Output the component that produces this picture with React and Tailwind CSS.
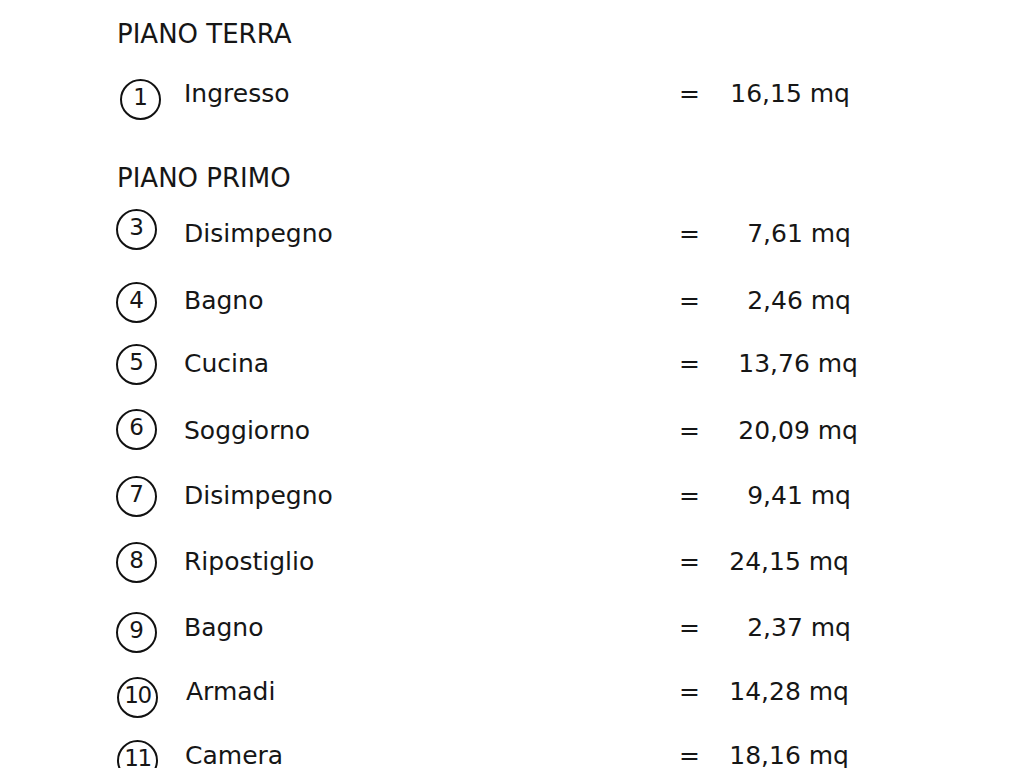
import React from 'react';

const rows = [
  { n: '1', name: 'Ingresso', value: '16,15 mq', mt: 'mt-[23px]', circle: 'ml-[3px] mt-[10px]', valueCls: 'w-[155px]' },
  { heading: 'PIANO PRIMO', mt: 'mt-[47px]' },
  { n: '3', name: 'Disimpegno', value: '7,61 mq', mt: 'mt-[19px]', circle: 'ml-[-1px] mb-[10px]', valueCls: 'w-[156px]' },
  { n: '4', name: 'Bagno', value: '2,46 mq', mt: 'mt-[23px]', circle: 'ml-[-1px] mt-[2px]', valueCls: 'w-[156px]' },
  { n: '5', name: 'Cucina', value: '13,76 mq', mt: 'mt-[19px]', circle: 'ml-[-1px]', valueCls: 'w-[163px]' },
  { n: '6', name: 'Soggiorno', value: '20,09 mq', mt: 'mt-[23px]', circle: 'ml-[-1px] mb-[4px]', valueCls: 'w-[163px]' },
  { n: '7', name: 'Disimpegno', value: '9,41 mq', mt: 'mt-[21px]', circle: 'ml-[-1px]', valueCls: 'w-[156px]' },
  { n: '8', name: 'Ripostiglio', value: '24,15 mq', mt: 'mt-[22px]', circle: 'ml-[-1px]', valueCls: 'w-[154px]' },
  { n: '9', name: 'Bagno', value: '2,37 mq', mt: 'mt-[22px]', circle: 'ml-[-1px] mt-[8px]', valueCls: 'w-[156px]' },
  { n: '10', name: 'Armadi', value: '14,28 mq', mt: 'mt-[20px]', circle: 'ml-[0px] mt-[10px]', valueCls: 'w-[154px]', nameCls: 'pl-[2px]' },
  { n: '11', name: 'Camera', value: '18,16 mq', mt: 'mt-[20px]', circle: 'ml-[0px] mt-[8px]', valueCls: 'w-[154px]', nameCls: 'pl-[1px]' },
];

function Circle({ n, className }) {
  return (
    <div className={`w-[41px] h-[41px] shrink-0 rounded-full border-[2px] border-[#111] flex items-center justify-center text-[23px] leading-none ${n.length > 1 ? 'tracking-[-1.5px]' : ''} ${className}`}>
      <span className="mt-[-3px]">{n}</span>
    </div>
  );
}

export default function App() {
  return (
    <div className="min-h-screen bg-white text-[#161616] font-['DejaVu_Sans',sans-serif] pl-[117px] pt-[19px] overflow-hidden h-[768px]">
      <div className="h-[30px] text-[26px] leading-[30px]">PIANO TERRA</div>
      {rows.map((r, i) =>
        r.heading ? (
          <div key={i} className={`h-[30px] text-[26px] leading-[30px] ${r.mt}`}>{r.heading}</div>
        ) : (
          <div key={i} className={`h-[44px] flex items-center text-[25px] ${r.mt}`}>
            <div className="w-[67px] shrink-0 flex">
              <Circle n={r.n} className={r.circle} />
            </div>
            <div className={`w-[495px] shrink-0 ${r.nameCls || ''}`}>{r.name}</div>
            <div className="w-[16px] shrink-0">=</div>
            <div className={`text-right shrink-0 ${r.valueCls}`}>{r.value}</div>
          </div>
        )
      )}
    </div>
  );
}
